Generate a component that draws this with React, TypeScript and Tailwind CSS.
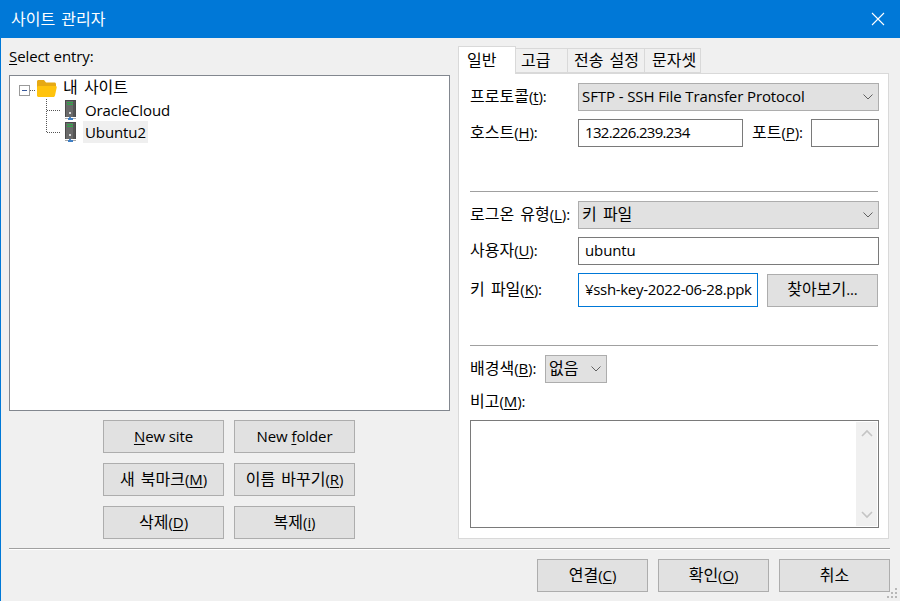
const FONT = { fontFamily: '"Open Sans", "Noto Sans CJK KR", sans-serif' };

function U({ children }: { children: React.ReactNode }) {
  return <span className="underline underline-offset-2">{children}</span>;
}

function K({ children }: { children: React.ReactNode }) {
  return <span className="text-[16px] tracking-normal [word-spacing:2px]">{children}</span>;
}

function Btn({ w, h, children }: { w: string; h: string; children: React.ReactNode }) {
  return (
    <div className={`${w} ${h} shrink-0 flex items-center justify-center border border-[#adadad] bg-[#e1e1e1] pb-[2px] text-[#000]`}>
      <span>{children}</span>
    </div>
  );
}

function Chevron() {
  return (
    <svg width="10" height="6" viewBox="0 0 10 6" fill="none" stroke="#606060" strokeWidth="1" className="mt-[2px] shrink-0">
      <path d="M.5 .5L5 5L9.5 .5" />
    </svg>
  );
}

function Select({ className, children }: { className: string; children: React.ReactNode }) {
  return (
    <div className={`${className} h-[28px] flex items-center justify-between border border-[#adadad] bg-[#e1e1e1] pb-[2px] pl-[3px] pr-[5px]`}>
      <span>{children}</span>
      <Chevron />
    </div>
  );
}

function Input({ className, children, blue }: { className: string; children?: React.ReactNode; blue?: boolean }) {
  return (
    <div className={`${className} flex items-center overflow-hidden border bg-white pb-[2px] pl-[6px] ${blue ? 'border-[#0078d7]' : 'border-[#7a7a7a]'}`}>
      <span className="whitespace-nowrap">{children}</span>
    </div>
  );
}

function Label({ w, children }: { w: string; children: React.ReactNode }) {
  return <span className={`${w} shrink-0 pb-[2px]`}>{children}</span>;
}

function Server() {
  return (
    <svg width="16" height="20" viewBox="0 0 16 20" className="shrink-0">
      <rect x="2" y="0" width="11" height="17" fill="#4a4a4a" />
      <rect x="3" y="1" width="9" height="16" fill="#6a6a6a" />
      <rect x="10" y="1" width="2" height="16" fill="#555" />
      <rect x="4" y="2" width="6" height="1" fill="#2eaa48" />
      <rect x="4" y="4" width="6" height="1" fill="#2eaa48" />
      <rect x="6" y="12" width="2" height="2" fill="#d8d8d8" />
      <rect x="6" y="17" width="2" height="1" fill="#4d86c6" />
      <rect x="2" y="18" width="11" height="1" fill="#a8a8a8" />
      <rect x="5" y="18" width="5" height="2" fill="#3f7fc4" />
    </svg>
  );
}

function Folder() {
  return (
    <svg width="20" height="17" viewBox="0 0 20 17" className="shrink-0">
      <path d="M0 1.5C0 .7.7 0 1.5 0H7l2 2.5h8.5c.8 0 1.5.7 1.5 1.5v4H0z" fill="#e6a914" />
      <path d="M0 16V7.5C0 6.7.7 6 1.5 6H18.5c.8 0 1.5.7 1.2 1.5L18 15.5c-.2.8-.8 1.5-1.6 1.5H1z" fill="#ffc30d" />
    </svg>
  );
}

export default function App() {
  return (
    <div style={FONT} className="w-[900px] h-[601px] relative flex flex-col overflow-hidden border-l border-[#0078d7] bg-[#f0f0f0] text-[15px] leading-[20px] tracking-[-0.1px] text-black">
      <div className="h-[38px] -ml-px shrink-0 flex items-center justify-between bg-[#0078d7] pl-[11px] pr-[15px] text-white">
        <K>사이트 관리자</K>
        <svg width="14" height="14" viewBox="0 0 14 14" stroke="#fff" strokeWidth="1.1" fill="none">
          <path d="M1 1L13 13M13 1L1 13" />
        </svg>
      </div>

      <div className="flex h-[501px] shrink-0 pl-[8px]">
        <div className="w-[441px] shrink-0 flex flex-col">
          <div className="h-[37px] flex items-center pb-[2px]"><span><U>S</U>elect entry:</span></div>
          <div className="relative h-[336px] border border-[#82878f] bg-white pl-[9px] pt-px">
            <svg width="60" height="60" className="absolute left-[9px] top-[3px]" fill="none">
              <rect x="0.5" y="6.5" width="10" height="10" fill="#fff" stroke="#9a9a9a" />
              <path d="M3 11.5H8" stroke="#3a5a9a" />
              <path d="M11 11.5H17" stroke="#555" strokeDasharray="1 1" />
              <path d="M27.5 20V53" stroke="#555" strokeDasharray="1 1" />
              <path d="M28 31.5H41M28 53.5H41" stroke="#555" strokeDasharray="1 1" />
            </svg>
            <div className="flex h-[22px] items-center pl-[18px]">
              <Folder />
              <span className="ml-[6px] pb-[2px]"><K>내 사이트</K></span>
            </div>
            <div className="flex h-[22px] items-center pl-[44px]">
              <Server />
              <span className="ml-[4px] h-[22px] px-[2px] pt-px">OracleCloud</span>
            </div>
            <div className="flex h-[22px] items-center pl-[44px]">
              <Server />
              <span className="ml-[4px] h-[22px] px-[2px] pt-px bg-[#efefef]">Ubuntu2</span>
            </div>
          </div>
          <div className="mt-[9px] ml-[94px] grid grid-cols-[121px_121px] gap-x-[10px] gap-y-[10px]">
            <Btn w="w-[121px]" h="h-[33px]"><U>N</U>ew site</Btn>
            <Btn w="w-[121px]" h="h-[33px]">New <U>f</U>older</Btn>
            <Btn w="w-[121px]" h="h-[33px]"><K>새 북마크</K>(<U>M</U>)</Btn>
            <Btn w="w-[121px]" h="h-[33px]"><K>이름 바꾸기</K>(<U>R</U>)</Btn>
            <Btn w="w-[121px]" h="h-[33px]"><K>삭제</K>(<U>D</U>)</Btn>
            <Btn w="w-[121px]" h="h-[33px]"><K>복제</K>(<U>i</U>)</Btn>
          </div>
        </div>

        <div className="ml-[8px] w-[431px] shrink-0 pt-[8px] flex flex-col">
          <div className="flex h-[27px] items-end">
            <div className="relative z-10 -mb-px h-[28px] w-[58px] flex items-center border border-b-0 border-[#d9d9d9] bg-white pb-[2px] pl-[8px]"><K>일반</K></div>
            <div className="h-[25px] w-[52px] flex items-center border-y border-r border-[#d9d9d9] pb-[1px] pl-[5px]"><K>고급</K></div>
            <div className="h-[25px] w-[77px] flex items-center border-y border-r border-[#d9d9d9] pb-[1px] pl-[6px]"><K>전송 설정</K></div>
            <div className="h-[25px] w-[56px] flex items-center border-y border-r border-[#d9d9d9] pb-[1px] pl-[7px]"><K>문자셋</K></div>
          </div>
          <div className="h-[466px] border border-[#d9d9d9] bg-white pl-[11px] pr-[9px] pt-[9px]">
            <div className="flex h-[28px] items-center">
              <Label w="w-[108px]"><K>프로토콜</K>(<U>t</U>):</Label>
              <Select className="w-[301px]">SFTP - SSH File Transfer Protocol</Select>
            </div>
            <div className="mt-[8px] flex h-[28px] items-center">
              <Label w="w-[108px]"><K>호스트</K>(<U>H</U>):</Label>
              <Input className="w-[165px] h-[28px] tracking-[-0.68px]">132.226.239.234</Input>
              <Label w="ml-[9px] w-[59px]"><K>포트</K>(<U>P</U>):</Label>
              <Input className="w-[68px] h-[28px]" />
            </div>
            <div className="mt-[44px] h-px w-[408px] bg-[#a0a0a0]" />
            <div className="mt-[9px] flex h-[28px] items-center">
              <Label w="w-[108px]"><K>로그온 유형</K>(<U>L</U>):</Label>
              <Select className="w-[301px]"><K>키 파일</K></Select>
            </div>
            <div className="mt-[8px] flex h-[28px] items-center">
              <Label w="w-[108px]"><K>사용자</K>(<U>U</U>):</Label>
              <Input className="w-[301px] h-[28px]">ubuntu</Input>
            </div>
            <div className="mt-[8px] flex h-[34px] items-center">
              <Label w="w-[108px]"><K>키 파일</K>(<U>K</U>):</Label>
              <Input blue className="w-[180px] h-[34px] tracking-[-0.32px]">¥ssh-key-2022-06-28.ppk</Input>
              <div className="ml-[9px]"><Btn w="w-[111px]" h="h-[33px]"><K>찾아보기</K>...</Btn></div>
            </div>
            <div className="mt-[38px] h-px w-[408px] bg-[#a0a0a0]" />
            <div className="mt-[9px] flex h-[28px] items-center">
              <Label w="w-[75px]"><K>배경색</K>(<U>B</U>):</Label>
              <Select className="w-[62px]"><K>없음</K></Select>
            </div>
            <div className="mt-[8px] h-[20px]"><K>비고</K>(<U>M</U>):</div>
            <div className="mt-[9px] h-[108px] w-[409px] border border-[#7a7a7a] bg-white flex justify-end py-px pr-px">
              <div className="w-[21px] h-full bg-[#f0f0f0] flex flex-col items-center justify-between py-[7px]">
                <svg width="12" height="8" viewBox="0 0 12 8" fill="none" stroke="#c4c4c4" strokeWidth="1.6"><path d="M1 7L6 2L11 7" /></svg>
                <svg width="12" height="8" viewBox="0 0 12 8" fill="none" stroke="#c4c4c4" strokeWidth="1.6"><path d="M1 1L6 6L11 1" /></svg>
              </div>
            </div>
          </div>
        </div>
      </div>

      <div className="ml-[8px] mt-[9px] w-[881px] shrink-0 h-[2px] border-t border-[#a0a0a0] bg-white" />
      <div className="ml-[536px] mt-[9px] flex gap-[10px]">
        <Btn w="w-[111px]" h="h-[33px]"><K>연결</K>(<U>C</U>)</Btn>
        <Btn w="w-[111px]" h="h-[33px]"><K>확인</K>(<U>O</U>)</Btn>
        <Btn w="w-[111px]" h="h-[33px]"><K>취소</K></Btn>
      </div>

      <svg width="12" height="12" viewBox="0 0 12 12" className="absolute right-[2px] bottom-[2px]" fill="#b8b8b8">
        <rect x="9" y="1" width="2" height="2" />
        <rect x="5" y="5" width="2" height="2" />
        <rect x="9" y="5" width="2" height="2" />
        <rect x="1" y="9" width="2" height="2" />
        <rect x="5" y="9" width="2" height="2" />
        <rect x="9" y="9" width="2" height="2" />
      </svg>
    </div>
  );
}
